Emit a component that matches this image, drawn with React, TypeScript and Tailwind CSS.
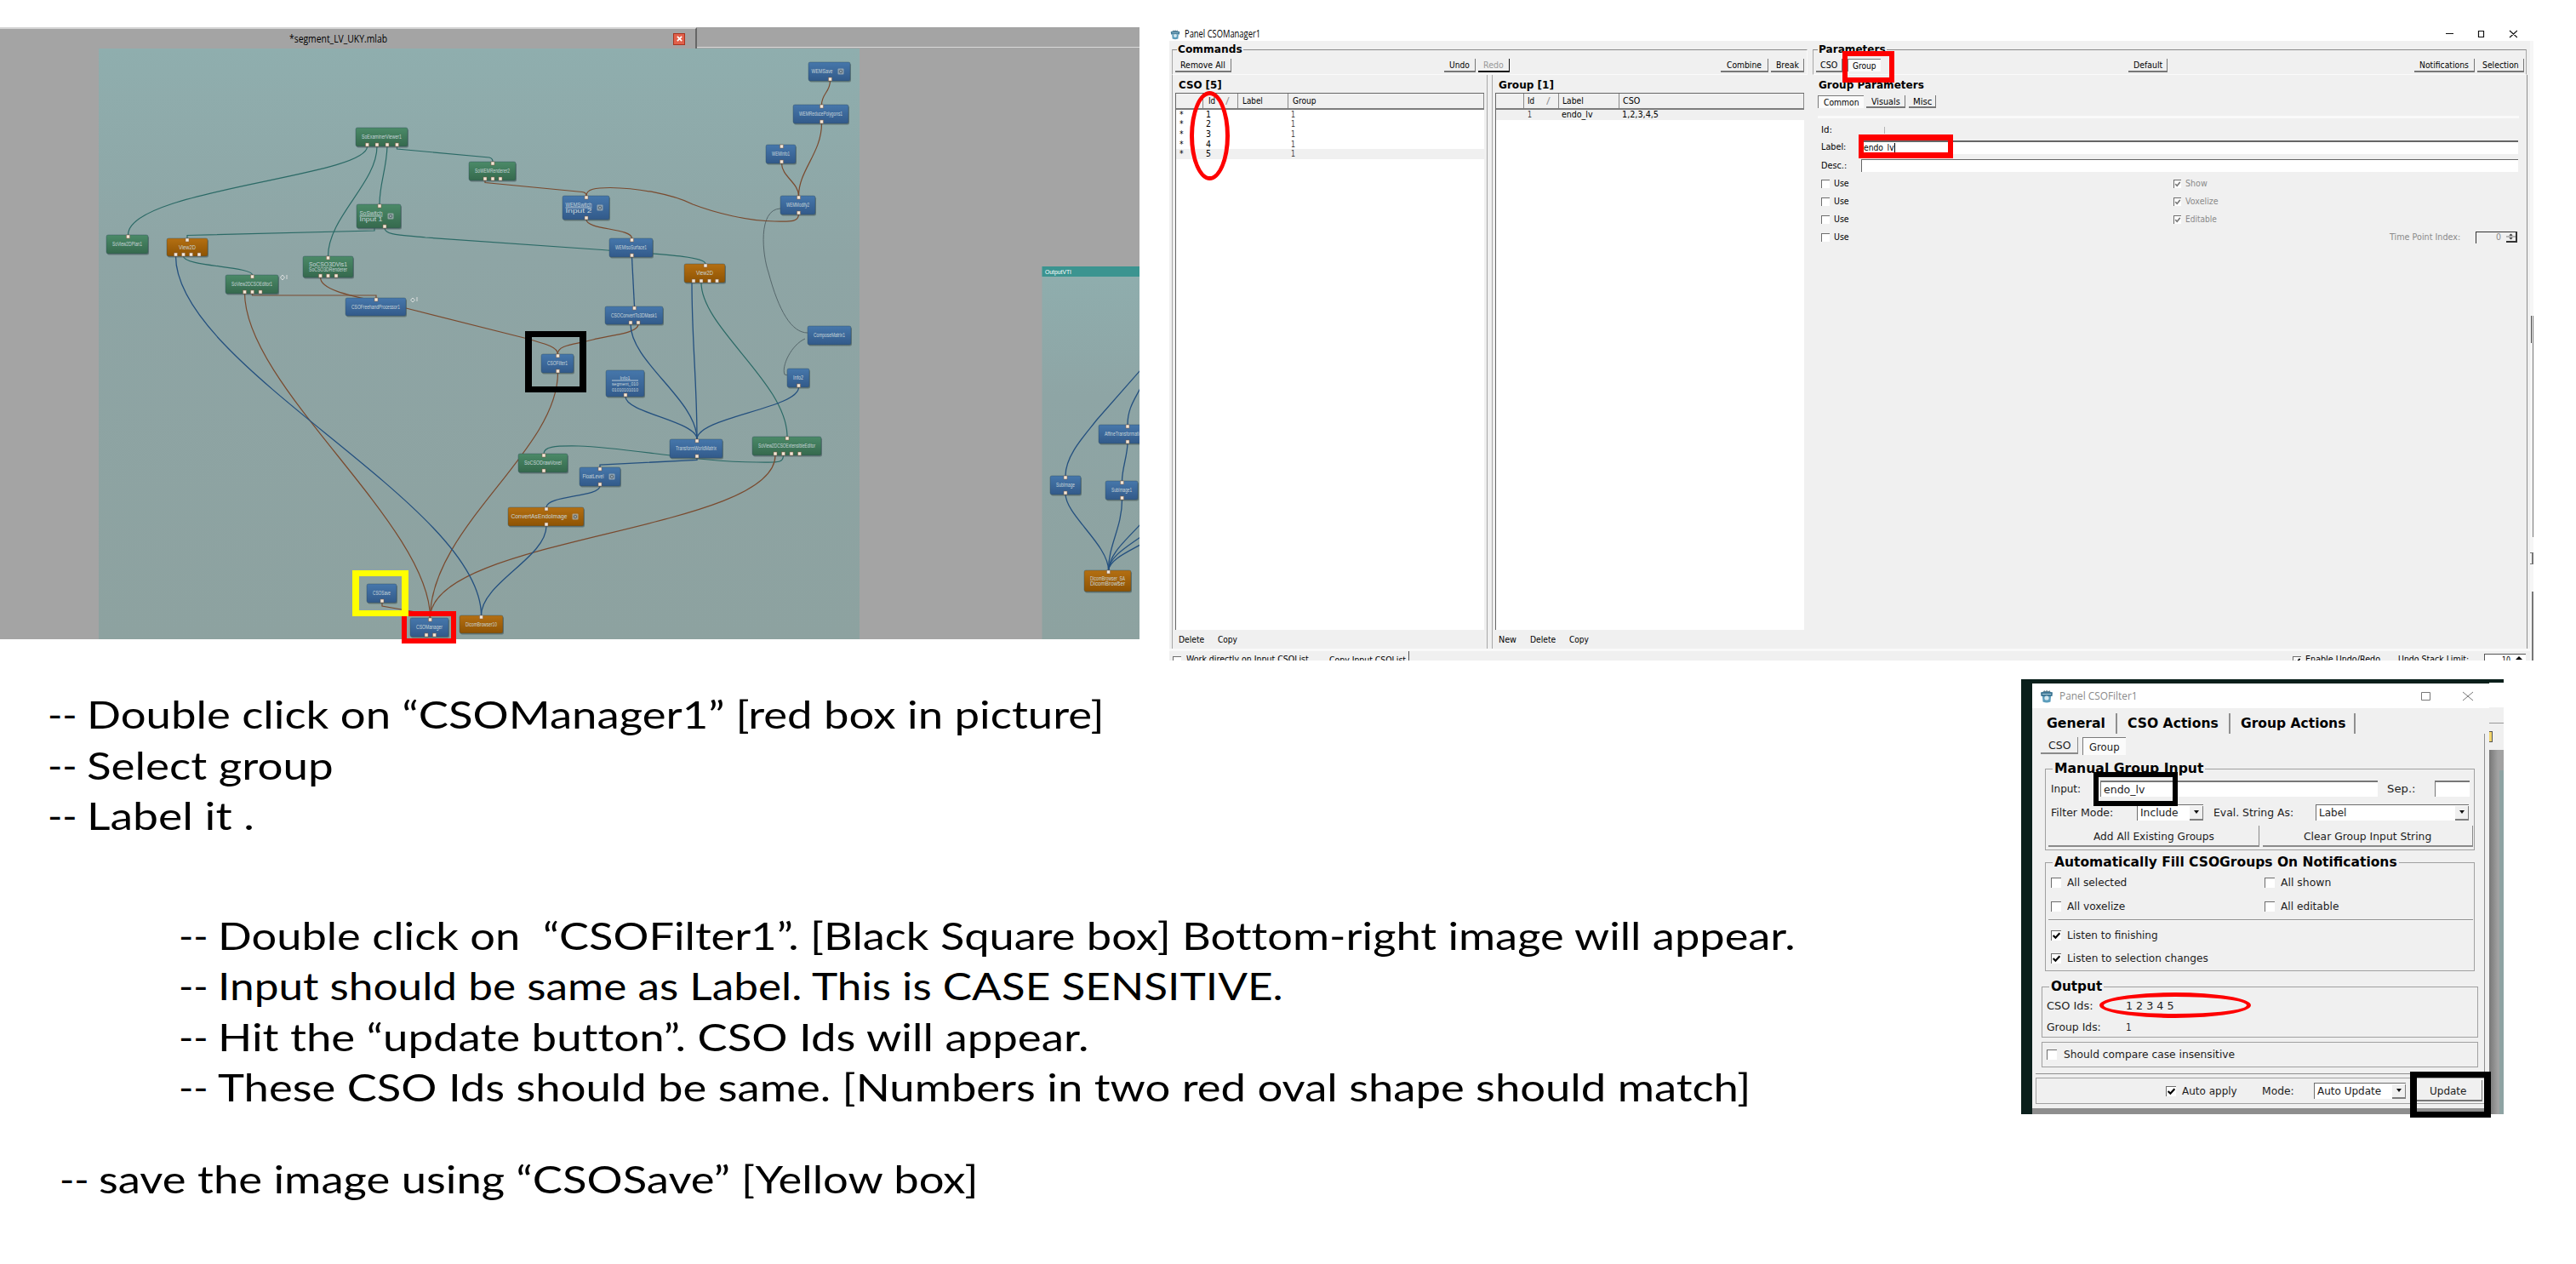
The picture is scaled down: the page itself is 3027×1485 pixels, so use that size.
import { useLayoutEffect, useRef, useState, type ReactNode } from "react";

/* Text stretched or squeezed horizontally to fill the width given by its class. */
function Fit({ c, children }: { c: string; children: ReactNode }) {
  const box = useRef<HTMLSpanElement>(null);
  const inner = useRef<HTMLSpanElement>(null);
  const [k, setK] = useState(1);
  useLayoutEffect(() => {
    if (box.current && inner.current) setK(box.current.clientWidth / inner.current.offsetWidth);
  }, []);
  return (
    <span ref={box} className={"block shrink-0 whitespace-pre " + c}>
      <span ref={inner} className="inline-block origin-left" style={{ transform: `scaleX(${k})` }}>
        {children}
      </span>
    </span>
  );
}

/* ---------- Node graph ---------- */

type Kind = "b" | "g" | "o";
type Node = {
  x: number; y: number; w: number; h: number; k: Kind;
  t: string[]; top?: number[]; bot?: number[]; icon?: number; rule?: boolean;
};

const nodes: Node[] = [
  { x: 418, y: 150, w: 61, h: 22, k: "g", t: ["SoExaminerViewer1"], bot: [431.5, 443, 455, 466.5] },
  { x: 551, y: 190, w: 55, h: 22, k: "g", t: ["SoWEMRenderer2"], top: [579], bot: [570, 579, 588] },
  { x: 419, y: 240, w: 52, h: 28, k: "g", t: ["SoSwitch", "Input 1"], top: [446], bot: [452], icon: 459, rule: true },
  { x: 125, y: 276, w: 49, h: 22, k: "g", t: ["SoView2DPlan1"], top: [150.5] },
  { x: 196, y: 280, w: 48, h: 21, k: "o", t: ["View2D"], top: [220], bot: [206.5, 215.5, 224.5, 234] },
  { x: 265, y: 323, w: 62, h: 22, k: "g", t: ["SoView2DCSOEditor1"], top: [296.5], bot: [287.5, 296.5, 306] },
  { x: 356, y: 301, w: 59, h: 25, k: "g", t: ["SoCSO3DVis1", "SoCSO3DRenderer"], top: [385.5], bot: [376.5, 385.5, 395] },
  { x: 406, y: 350, w: 71, h: 21, k: "b", t: ["CSOFreehandProcessor1"], top: [442] },
  { x: 950, y: 73, w: 49, h: 22, k: "b", t: ["WEMSave"], bot: [975.5], icon: 988 },
  { x: 932, y: 123, w: 65, h: 22, k: "b", t: ["WEMReducePolygons1"], top: [965.5], bot: [965.5] },
  { x: 900, y: 170, w: 35, h: 22, k: "b", t: ["WEMInfo1"], top: [918.5], bot: [918.5] },
  { x: 917, y: 230, w: 41, h: 22, k: "b", t: ["WEMModify2"], top: [938.5], bot: [938.5] },
  { x: 661, y: 230, w: 55, h: 28, k: "b", t: ["WEMSwitch", "Input 2"], top: [689], bot: [689], icon: 705, rule: true },
  { x: 716, y: 280, w: 51, h: 22, k: "b", t: ["WEMIsoSurface1"], top: [742.5], bot: [742.5] },
  { x: 804, y: 310, w: 48, h: 22, k: "o", t: ["View2D"], top: [829], bot: [815, 824, 833.5, 842.5] },
  { x: 711, y: 360, w: 68, h: 21, k: "b", t: ["CSOConvertTo3DMask1"], top: [745.5], bot: [741, 750] },
  { x: 949, y: 383, w: 51, h: 22, k: "b", t: ["ComposeMatrix1"] },
  { x: 636, y: 416, w: 38, h: 22, k: "b", t: ["CSOFilter1"], top: [655.5], bot: [655.5] },
  { x: 609, y: 533, w: 58, h: 22, k: "g", t: ["SoCSODrawVoxel"], top: [639], bot: [639] },
  { x: 597, y: 596, w: 89, h: 22, k: "o", t: ["ConvertAsEndoImage"], top: [642], bot: [642], icon: 676 },
  { x: 431, y: 686, w: 35, h: 22, k: "b", t: ["CSOSave"], bot: [449] },
  { x: 482, y: 726, w: 45, h: 22, k: "b", t: ["CSOManager"], top: [505.5], bot: [501, 510.5] },
  { x: 540, y: 723, w: 51, h: 21, k: "o", t: ["DicomBrowser10"], top: [565.5] },
  { x: 712, y: 435, w: 45, h: 31, k: "b", t: ["Info1", "segment_010", "01010101010"], bot: [735], rule: true },
  { x: 925, y: 433, w: 26, h: 22, k: "b", t: ["Info2"], bot: [938.5] },
  { x: 787, y: 516, w: 62, h: 22, k: "b", t: ["TransformWorldMatrix"], top: [819], bot: [819] },
  { x: 884, y: 513, w: 81, h: 22, k: "g", t: ["SoView2DCSOExtensibleEditor"], top: [925], bot: [911, 920.5, 930, 939.5] },
  { x: 681, y: 549, w: 48, h: 22, k: "b", t: ["FloatLevel"], top: [705], bot: [705], icon: 719 },
  { x: 1291, y: 499, w: 60, h: 22, k: "b", t: ["AffineTransformation"], top: [1325], bot: [1325] },
  { x: 1234, y: 559, w: 36, h: 22, k: "b", t: ["SubImage"], top: [1252], bot: [1252] },
  { x: 1299, y: 565, w: 38, h: 22, k: "b", t: ["SubImage1"], top: [1318.5], bot: [1318.5] },
  { x: 1274, y: 670, w: 55, h: 25, k: "o", t: ["DicomBrowser_SA", "DicomBrowser"], top: [1302.5] },
];

const green = [
  "M431.5 172C431.5 208 150.5 222 150.5 276",
  "M443 172C443 215 385.5 255 385.5 301",
  "M455 172C454 200 446 215 446 240",
  "M466.5 172V175L575 185Q579 186 579 190",
  "M440 268V271L220 276.500V280",
  "M452 268C452 276 470 276 500 279L700 293C760 298 829 300 829 310",
  "M215.500 301C215.500 313 296.500 313 296.500 323",
  "M824 332C824 385 925 450 925 513",
  "M920.500 535C920.500 545 912 543 889 543C820 543 740 526 680 524C650 523.500 639 525 639 533",
];
const brown = [
  "M975.500 95C975.500 108 965.500 110 965.500 123",
  "M965.500 145C965.500 180 938.500 200 938.500 230",
  "M918.500 192C918.500 207 938.500 215 938.500 230",
  "M938.500 252C938 262 925 260 910 260C880 260 840 250 814 240C790 228 750 221 717 220.500C700 220.500 689 222 689 230",
  "M570 212V214.500L684 225.500Q689 226 689 230",
  "M689 258C689 270 742.500 268 742.500 280",
  "M376.500 326C376.500 344 430 350 477 362L616 397C645 405 655 408 655.500 416",
  "M296.500 345V347H442V350",
  "M287.500 344C287.500 454 505.500 616 505.500 726",
  "M655.500 438C655.500 530 505.500 620 505.500 726",
  "M911 535C911 625 505.500 630 505.500 726",
  "M449 708V712L500 721Q505 722 505.500 726",
  "M750 381C750 392 715 394 697 399C675 405 655 405 655.500 416",
];
const blue = [
  "M742.500 302L745.500 360",
  "M741 381C741 425 819 470 819 516",
  "M813 332C813 400 819 450 819 516",
  "M735 466C735 485 819 495 819 516",
  "M938.500 455C938.500 480 819 490 819 516",
  "M206.500 301C206.500 431 565.500 593 565.500 723",
  "M819 538V540.500L705 546V549",
  "M705 571C705 584 642 582 642 596",
  "M642 618C642 655 565.500 685 565.500 723",
  "M1340 435L1289 493C1275 511 1252 535 1252 559",
  "M1340 456C1333 470 1325 480 1325 499",
  "M1325 520C1325 535 1318.500 550 1318.500 565",
  "M1252 580C1252 605 1302.500 640 1302.500 670",
  "M1318.500 587C1318.500 620 1302.500 640 1302.500 670",
  "M1340 616C1322 636 1304 650 1302.500 670",
  "M1340 631C1322 644 1304 654 1302.500 670",
  "M1340 640C1322 650 1304 658 1302.500 670",
];
const thin = [
  "M917 245C890 246 896 300 903 320C915 365 930 391 949 391",
  "M946 398C930 405 918 430 922 440L926 441",
];

function GraphNode({ n }: { n: Node }) {
  const fill = n.k === "b" ? "url(#nb)" : n.k === "g" ? "url(#ng)" : "url(#no)";
  const room = n.icon ? n.icon - 6 - n.x : n.w;
  const cx = n.x + room / 2;
  const len = room - (n.icon ? 7 : 14);
  const cy = n.y + n.h / 2;
  const step = n.rule ? 7 : 5.5;
  return (
    <g>
      <rect x={n.x + 1} y={n.y + 1.5} width={n.w} height={n.h} rx="2" fill="#4a5c5c" opacity="0.6" />
      <rect x={n.x} y={n.y} width={n.w} height={n.h} rx="2" fill={fill} stroke="#2f4a5a" strokeOpacity="0.5" strokeWidth="0.8" />
      {n.t.map((s, i) => (
        <text
          key={i}
          x={cx}
          y={cy + 2.3 + (i - (n.t.length - 1) / 2) * step}
          textAnchor="middle"
          textLength={n.t.length > 1 && i === 0 && n.t.length === 3 ? 12 : s === "View2D" ? 20 : len}
          lengthAdjust="spacingAndGlyphs"
          fontSize={n.t.length === 3 ? 5.5 : 6.5}
          fill="#c9d6da"
        >
          {s}
        </text>
      ))}
      {n.rule && <path d={`M${cx - len / 2} ${n.t.length === 3 ? n.y + 12 : cy}h${len}`} stroke="#dbe4e6" strokeWidth="0.8" />}
      {n.icon && (
        <g>
          <rect x={n.icon - 3.5} y={cy - 3.5} width="7" height="7" rx="1" fill="#a9b4b8" opacity="0.75" />
          <circle cx={n.icon} cy={cy} r="1.8" fill="none" stroke="#50606a" strokeWidth="0.9" />
        </g>
      )}
      {n.top?.map((p) => <rect key={p} x={p - 2} y={n.y} width="4" height="4" fill="#f1e6d8" stroke="#7d5a40" strokeWidth="0.5" />)}
      {n.bot?.map((p) => <rect key={p} x={p - 2} y={n.y + n.h - 4} width="4" height="4" fill="#f1e6d8" stroke="#7d5a40" strokeWidth="0.5" />)}
    </g>
  );
}

function Wires({ list, color, w }: { list: string[]; color: string; w: number }) {
  return (
    <g fill="none" stroke={color} strokeWidth={w}>
      {list.map((d) => <path key={d} d={d} />)}
    </g>
  );
}

function Graph() {
  return (
    <div className="flex h-[719px] w-[1339px] shrink-0 flex-col bg-[#a4a4a4]">
      <div className="flex h-[25px]">
        <div className="flex h-full w-[819px] items-center border-t-2 border-r-2 border-t-[#d4d4d4] border-r-[#666] pl-[340px]">
          <Fit c="w-[115px] font-[Open_Sans,sans-serif] text-[12px] leading-[18px] text-black">*segment_LV_UKY.mlab</Fit>
          <div className="ml-[336px] flex h-[14px] w-[14px] items-center justify-center border border-[#a8331f] bg-[#e2604a]">
            <svg viewBox="0 0 8 8" className="h-[7px] w-[7px]"><path d="M1 1L7 7M7 1L1 7" stroke="#fff" strokeWidth="2" /></svg>
          </div>
        </div>
        <div className="h-[24px] flex-1 border-b border-[#d8d8d8]" />
      </div>
      <svg viewBox="0 57 1339 694" className="h-[694px] w-[1339px] font-[Liberation_Sans,sans-serif]">
        <defs>
          <linearGradient id="bg" x1="0" y1="0" x2="0" y2="1">
            <stop offset="0" stopColor="#8faeae" /><stop offset="0.35" stopColor="#8ea5a5" /><stop offset="1" stopColor="#8da2a0" />
          </linearGradient>
          <linearGradient id="nb" x1="0" y1="0" x2="0" y2="1"><stop offset="0" stopColor="#4677ab" /><stop offset="1" stopColor="#325a8a" /></linearGradient>
          <linearGradient id="ng" x1="0" y1="0" x2="0" y2="1"><stop offset="0" stopColor="#4b8a68" /><stop offset="1" stopColor="#35694d" /></linearGradient>
          <linearGradient id="no" x1="0" y1="0" x2="0" y2="1"><stop offset="0" stopColor="#b46f12" /><stop offset="1" stopColor="#8e5303" /></linearGradient>
        </defs>
        <rect x="116" y="57" width="894" height="694" fill="url(#bg)" />
        <rect x="1224.500" y="313" width="115" height="438" fill="url(#bg)" />
        <rect x="1224.500" y="313" width="115" height="12" fill="#3b9490" />
        <text x="1228" y="321.500" fontSize="7.500" fill="#fff" textLength="31" lengthAdjust="spacingAndGlyphs">OutputVTI</text>
        <Wires list={thin} color="#4f6064" w={0.9} />
        <Wires list={green} color="#2b6a66" w={1.2} />
        <Wires list={brown} color="#7a4a2e" w={1.2} />
        <Wires list={blue} color="#24507f" w={1.3} />
        {nodes.map((n) => <GraphNode key={`${n.x}-${n.y}`} n={n} />)}
        <g fill="none" stroke="#e3e3e3" strokeWidth="0.9">
          <path d="M332 323l2.500 3l-2.500 3l-2.500-3zM337 328v-5M485 350l2.500 2.500l-2.500 2.500l-2.500-2.500zM490 354v-5" />
        </g>
      </svg>
    </div>
  );
}

/* ---------- Classic dialog widgets ---------- */

function Btn({ c, t, children }: { c: string; t: string; children: string }) {
  return (
    <div className={"flex shrink-0 items-center justify-center border-r-[1.5px] border-b-2 bg-[#f0f0f0] pt-[2px] " + c}>
      <Fit c={t}>{children}</Fit>
    </div>
  );
}

function Pressed({ c, t, children }: { c: string; t: string; children: string }) {
  return (
    <div className={"flex shrink-0 items-center justify-center border-t-[1.5px] border-l-[1.5px] border-[#7a7a7a] bg-[#fbfbfb] pt-px " + c}>
      <Fit c={t}>{children}</Fit>
    </div>
  );
}

function Check({ c, on }: { c: string; on?: boolean }) {
  return (
    <div className={"shrink-0 border-t-[1.5px] border-l-[1.5px] border-[#6d6d6d] bg-white " + c}>
      {on && (
        <svg viewBox="0 0 10 10" preserveAspectRatio="none" className="h-full w-full">
          <path d="M1.500 4.500L4 7L8.500 2" fill="none" stroke="currentColor" strokeWidth="2" />
        </svg>
      )}
    </div>
  );
}

function Logo({ c }: { c: string }) {
  return (
    <svg viewBox="0 0 16 16" className={"shrink-0 " + c}>
      <path d="M1 3.500Q8 1 15 3.500L14.500 8H1.500Z" fill="#3f7896" />
      <path d="M3 8H13L12.500 14.500Q8 16.500 3.500 14.500Z" fill="#5b9dbc" />
      <path d="M4 3L5 1L7 2.500L8 0.500L9.500 2.500L11.500 1L12 3Z" fill="#5c7f8e" />
      <circle cx="8" cy="10" r="2.600" fill="#d5e8ef" />
      <path d="M3 5.500H13" stroke="#a8cbd9" strokeWidth="1" />
    </svg>
  );
}

function Select({ c, t, children }: { c: string; t: string; children: string }) {
  return (
    <div className={"flex h-[19px] shrink-0 items-center border-t-[1.5px] border-l-[1.5px] border-[#6d6d6d] bg-white pl-[3px] " + c}>
      <Fit c={t}>{children}</Fit>
      <div className="ml-auto flex h-[17px] w-[16px] items-center justify-center border-r-[1.500px] border-b-2 border-[#7d7d7d] bg-[#f0f0f0]">
        <svg viewBox="0 0 6 4" className="h-[4px] w-[6px]"><path d="M0 0H6L3 4Z" fill="#111" /></svg>
      </div>
    </div>
  );
}

/* ---------- CSOManager window ---------- */

function HeadCell({ c, children }: { c: string; children?: ReactNode }) {
  return <div className={"flex h-full shrink-0 items-center border-r border-[#8a8a8a] pt-px " + c}>{children}</div>;
}

function CsoTable() {
  return (
    <div className="flex h-[674px] w-[371px] flex-col border-x border-[#a8a8a8] pl-[3px]">
      <Fit c="ml-[4px] mt-[3px] h-[18px] w-[51px] text-[13px] leading-[18px] font-bold">CSO [5]</Fit>
      <div className="h-[631px] w-[363px] border-t border-l-[1.500px] border-[#666] bg-white">
        <div className="flex h-[19px] border-b-2 border-[#7d7d7d] bg-[#f0f0f0]">
          <HeadCell c="w-[32px]" />
          <HeadCell c="w-[41px] pl-[6px]">
            <Fit c="w-[8px]">Id</Fit>
            <Fit c="ml-[12px] w-[5px] text-[#999]">/</Fit>
          </HeadCell>
          <HeadCell c="w-[59px] pl-[5px]"><Fit c="w-[24px]">Label</Fit></HeadCell>
          <HeadCell c="flex-1 pl-[5px]"><Fit c="w-[28px]">Group</Fit></HeadCell>
        </div>
        {["1", "2", "3", "4", "5"].map((id) => (
          <div key={id} className={"flex h-[11.600px] items-center pl-[4px] leading-[12px] " + (id === "5" ? "bg-[#f0f0f0]" : "")}>
            <Fit c="w-[5px]">*</Fit>
            <Fit c="ml-[26px] w-[6px]">{id}</Fit>
            <Fit c="ml-[94px] w-[5px] text-[#444]">1</Fit>
          </div>
        ))}
      </div>
      <div className="flex h-[21px] items-center pt-[3px] pl-[4px]">
        <Fit c="w-[30px]">Delete</Fit>
        <Fit c="ml-[16px] w-[23px]">Copy</Fit>
      </div>
    </div>
  );
}

function GroupTable() {
  return (
    <div className="ml-[5px] flex h-[674px] w-[371px] flex-col border-l border-[#a8a8a8] pl-[3px]">
      <Fit c="ml-[4px] mt-[3px] h-[18px] w-[65px] text-[13px] leading-[18px] font-bold">Group [1]</Fit>
      <div className="h-[631px] w-[363px] border-t border-l-[1.500px] border-[#666] bg-white">
        <div className="flex h-[19px] border-b-2 border-[#7d7d7d] bg-[#f0f0f0]">
          <HeadCell c="w-[33px]" />
          <HeadCell c="w-[41px] pl-[4px]">
            <Fit c="w-[8px]">Id</Fit>
            <Fit c="ml-[14px] w-[5px] text-[#999]">/</Fit>
          </HeadCell>
          <HeadCell c="w-[71px] pl-[4px]"><Fit c="w-[25px]">Label</Fit></HeadCell>
          <HeadCell c="flex-1 pl-[4px]"><Fit c="w-[20px]">CSO</Fit></HeadCell>
        </div>
        <div className="flex h-[11.600px] items-center bg-[#f0f0f0] pl-[37px] leading-[12px]">
          <Fit c="w-[5px] text-[#444]">1</Fit>
          <Fit c="ml-[35px] w-[37px]">endo_lv</Fit>
          <Fit c="ml-[34px] w-[43px]">1,2,3,4,5</Fit>
        </div>
      </div>
      <div className="flex h-[21px] items-center pt-[3px] pl-[4px]">
        <Fit c="w-[21px]">New</Fit>
        <Fit c="ml-[16px] w-[30px]">Delete</Fit>
        <Fit c="ml-[16px] w-[23px]">Copy</Fit>
      </div>
    </div>
  );
}

function UseRow({ children }: { children?: ReactNode }) {
  return (
    <div className="flex h-[21px] items-center pl-[10px]">
      <Check c="h-[10px] w-[10px]" />
      <Fit c="ml-[5px] w-[18px]">Use</Fit>
      {children}
    </div>
  );
}

function GrayOption({ t, children }: { t: string; children: string }) {
  return (
    <div className="ml-[381px] flex items-center text-[#8a8a8a]">
      <Check c="h-[10px] w-[9px] text-[#777]" on />
      <Fit c={"ml-[5px] " + t}>{children}</Fit>
    </div>
  );
}

function ManagerWindow() {
  return (
    <div className="flex h-[744px] w-[1603px] shrink-0 flex-col overflow-hidden font-[DejaVu_Sans,sans-serif] text-[11px] leading-[14px] text-black">
      <div className="flex h-[16px] items-center bg-white">
        <Logo c="ml-px h-[13px] w-[12px]" />
        <Fit c="ml-[5px] w-[89px] font-[Open_Sans,sans-serif] text-[12px]">Panel CSOManager1</Fit>
        <svg viewBox="0 0 84 12" className="ml-[1393px] h-[12px] w-[84px]">
          <path d="M0 5.500H9M38.500 2.500H44.500V9.500H38.500ZM75 2L84 10M84 2L75 10" fill="none" stroke="#111" strokeWidth="1.200" />
        </svg>
      </div>
      <div className="flex h-[728px]">
        <div className="flex w-[1599px] flex-col bg-[#f0f0f0]">
          <div className="flex h-[714px]">
            <div className="w-[753px] pl-[3px]">
              <fieldset className="mt-[2px] h-[38px] w-[747px] border border-t-[#8a8a8a] border-r-[#fafafa] border-b-[#fafafa] border-l-[#a8a8a8]">
                <legend className="ml-[5px] h-[16px] px-px">
                  <Fit c="h-[16px] w-[76px] text-[13px] leading-[16px] font-bold">Commands</Fit>
                </legend>
                <div className="flex pt-[3px] pl-[3px]">
                  <Btn c="h-[16px] w-[66px] border-[#777]" t="w-[53px]">Remove All</Btn>
                  <Btn c="ml-[250px] h-[16px] w-[37px] border-[#777]" t="w-[24px]">Undo</Btn>
                  <Btn c="ml-[3px] h-[16px] w-[37px] border-[#111] text-[#999]" t="w-[24px]">Redo</Btn>
                  <Btn c="ml-[248px] h-[16px] w-[56px] border-[#777]" t="w-[41px]">Combine</Btn>
                  <Btn c="ml-[3px] h-[16px] w-[39px] border-[#777]" t="w-[27px]">Break</Btn>
                </div>
              </fieldset>
              <div className="flex">
                <CsoTable />
                <GroupTable />
              </div>
            </div>
            <div className="w-[846px] pl-[3px]">
              <fieldset className="mt-[2px] h-[38px] w-[839px] border border-t-[#8a8a8a] border-r-[#a8a8a8] border-b-[#fafafa] border-l-[#a8a8a8]">
                <legend className="ml-[5px] h-[16px] px-px">
                  <Fit c="h-[16px] w-[79px] text-[13px] leading-[16px] font-bold">Parameters</Fit>
                </legend>
                <div className="flex pt-[3px] pl-[3px]">
                  <Btn c="h-[16px] w-[31px] border-[#777]" t="w-[20px]">CSO</Btn>
                  <Pressed c="ml-[6px] h-[15px] w-[39px]" t="w-[28px]">Group</Pressed>
                  <Btn c="ml-[291px] h-[16px] w-[46px] border-[#777]" t="w-[34px]">Default</Btn>
                  <Btn c="ml-[290px] h-[16px] w-[71px] border-[#777]" t="w-[58px]">Notifications</Btn>
                  <Btn c="ml-[3px] h-[16px] w-[55px] border-[#777]" t="w-[43px]">Selection</Btn>
                </div>
              </fieldset>
              <div className="h-[674px] w-[840px] border-r border-[#8f8f8f]">
                <Fit c="ml-[7px] pt-[3px] h-[21px] w-[124px] text-[13px] leading-[18px] font-bold">Group Parameters</Fit>
                <div className="mt-[3px] flex h-[15px] pl-[6px]">
                  <Pressed c="h-[15px] w-[54px]" t="w-[42px]">Common</Pressed>
                  <Btn c="ml-[3px] h-[15px] w-[46px] border-[#777]" t="w-[34px]">Visuals</Btn>
                  <Btn c="ml-[4px] h-[15px] w-[32px] border-[#777]" t="w-[22px]">Misc</Btn>
                </div>
                <div className="mt-[9px] ml-[6px] h-[3px] w-[824px] bg-[#fafafa]" />
                <div className="mt-[7px] flex h-[14px] items-center pl-[10px]">
                  <Fit c="w-[13px]">Id:</Fit>
                  <span className="ml-[61px] h-[8px] w-px bg-[#b5b5b5]" />
                </div>
                <div className="mt-[5px] flex h-[16px] items-center pl-[10px]">
                  <Fit c="w-[29px]">Label:</Fit>
                  <div className="ml-[18px] flex h-[16px] w-[772px] items-center border-t-2 border-l-[1.500px] border-[#666] bg-white pl-[2px]">
                    <Fit c="w-[36px]">endo_lv</Fit>
                    <span className="h-[12px] w-px bg-black" />
                  </div>
                </div>
                <div className="mt-[6px] flex h-[15px] items-center pl-[10px]">
                  <Fit c="w-[30px]">Desc.:</Fit>
                  <div className="ml-[17px] h-[15px] w-[772px] border-t-[1.500px] border-l-[1.500px] border-[#666] bg-white" />
                </div>
                <div className="mt-[3px]">
                  <UseRow><GrayOption t="w-[26px]">Show</GrayOption></UseRow>
                  <UseRow><GrayOption t="w-[39px]">Voxelize</GrayOption></UseRow>
                  <UseRow><GrayOption t="w-[37px]">Editable</GrayOption></UseRow>
                  <UseRow>
                    <Fit c="ml-[635px] w-[83px] text-[#8a8a8a]">Time Point Index:</Fit>
                    <div className="ml-[18px] flex h-[14px] w-[49px] items-center border-t-[1.500px] border-l-[1.500px] border-[#333] pl-[23px] text-[#8a8a8a]">
                      <Fit c="w-[6px]">0</Fit>
                      <div className="ml-auto flex h-[12px] w-[13px] flex-col items-center justify-around border-r-2 border-b-2 border-[#333]">
                        <svg viewBox="0 0 14 12" className="h-[10px] w-[11px]"><path d="M5 4H9L7 2ZM5 8H9L7 10ZM0 6H14" fill="#333" stroke="#333" strokeWidth="0.800" /></svg>
                      </div>
                    </div>
                  </UseRow>
                </div>
              </div>
            </div>
          </div>
          <div className="flex h-[14px] border-t-[3px] border-[#f9f9f9] pl-[4px]">
            <Check c="mt-[6px] h-[10px] w-[10px]" />
            <Fit c="mt-[3px] ml-[6px] w-[144px]">Work directly on Input CSOList</Fit>
            <div className="ml-[21px] h-[20px] w-[97px] border-r border-[#555] pt-[4px] pl-[3px]"><Fit c="w-[90px]">Copy Input CSOList</Fit></div>
            <Check c="mt-[6px] ml-[1038px] h-[10px] w-[10px]" on />
            <Fit c="mt-[3px] ml-[5px] w-[88px]">Enable Undo/Redo</Fit>
            <Fit c="mt-[3px] ml-[21px] w-[83px]">Undo Stack Limit:</Fit>
            <div className="mt-[3px] ml-[18px] flex h-[16px] w-[49px] border-t-[1.500px] border-l-[1.500px] border-[#555] bg-white pl-[20px]">
              <Fit c="w-[10px]">10</Fit>
              <svg viewBox="0 0 8 4" className="mt-[2px] ml-[6px] h-[4px] w-[8px]"><path d="M4 0L8 4H0Z" /></svg>
            </div>
          </div>
        </div>
        <div className="flex w-[4px] flex-col bg-[#f6f6f6]">
          <div className="mt-[323px] h-[260px] border-r border-[#777]">
            <div className="h-[32px] w-[2px] border-r border-[#444]" />
          </div>
          <div className="mt-[18px] h-[14px] border-y border-r-2 border-[#777]" />
          <div className="mt-[32px] h-[81px] border-r-2 border-[#777]" />
        </div>
      </div>
    </div>
  );
}

/* ---------- CSOFilter window ---------- */

function FilterWindow() {
  return (
    <div className="flex h-[511px] w-[567px] bg-[#0a1f1b] font-[DejaVu_Sans,sans-serif] text-[12px] leading-[16px] text-[#1c1c1c]">
      <div className="ml-[13px] flex h-[511px] w-[537px] flex-col pt-[5px]">
        <div className="flex h-[29px] shrink-0 items-center bg-white pl-[9px]">
          <Logo c="h-[16px] w-[16px]" />
          <Fit c="ml-[7px] w-[92px] font-[Open_Sans,sans-serif] text-[12px] text-[#8a8a8a]">Panel CSOFilter1</Fit>
          <svg viewBox="0 0 62 12" className="ml-[333px] h-[12px] w-[62px]">
            <path d="M0.500 1.500H10.500V10.500H0.500ZM49 1L61 11M61 1L49 11" fill="none" stroke="#777" strokeWidth="1" />
          </svg>
        </div>
        <div className="h-[470px] shrink-0 bg-[#f0f0f0]">
          <div className="flex h-[30px] items-center pt-[6px] text-[15px] leading-[20px] font-bold text-black">
            <Fit c="ml-[17px] w-[69px]">General</Fit>
            <span className="ml-[12px] h-[24px] w-[2px] bg-[#8f8f8f]" />
            <Fit c="ml-[12px] w-[107px]">CSO Actions</Fit>
            <span className="ml-[12px] h-[24px] w-[2px] bg-[#8f8f8f]" />
            <Fit c="ml-[12px] w-[123px]">Group Actions</Fit>
            <span className="ml-[10px] h-[24px] w-[2px] bg-[#8f8f8f]" />
          </div>
          <div className="ml-[4px] h-[400px] w-[528px] border-r-[1.500px] border-b border-[#8f8f8f]">
            <div className="flex h-[24px] pt-[4px] pl-[6px]">
              <Btn c="h-[20px] w-[44px] border-[#8a8a8a]" t="w-[26px]">CSO</Btn>
              <Pressed c="ml-[5px] h-[21px] w-[51px]" t="w-[36px]">Group</Pressed>
            </div>
            <fieldset className="mt-[8px] ml-[11px] h-[105px] w-[505px] border border-[#a0a0a0]">
              <legend className="ml-[8px] h-[18px] px-[2px]">
                <Fit c="h-[18px] w-[175px] text-[15px] leading-[18px] font-bold text-black">Manual Group Input</Fit>
              </legend>
              <div className="mt-[5px] flex h-[19px] items-center pl-[6px]">
                <Fit c="w-[35px]">Input:</Fit>
                <div className="ml-[23px] flex h-[19px] w-[326px] items-center border-t-2 border-l-[1.500px] border-[#777] bg-white pl-[3px]"><Fit c="w-[48px]">endo_lv</Fit></div>
                <Fit c="ml-[11px] w-[33px]">Sep.:</Fit>
                <div className="ml-[23px] h-[19px] w-[41px] border-t-2 border-l-[1.500px] border-[#777] bg-white" />
              </div>
              <div className="mt-[9px] flex h-[19px] items-center pl-[6px]">
                <Fit c="w-[73px]">Filter Mode:</Fit>
                <Select c="ml-[28px] w-[78px]" t="w-[45px]">Include</Select>
                <Fit c="ml-[12px] w-[94px]">Eval. String As:</Fit>
                <Select c="ml-[26px] w-[180px]" t="w-[32px]">Label</Select>
              </div>
              <div className="mt-[6px] flex pl-[3px]">
                <Btn c="h-[25px] w-[248px] border-[#8a8a8a]" t="w-[142px]">Add All Existing Groups</Btn>
                <Btn c="ml-[4px] h-[25px] w-[247px] border-[#8a8a8a]" t="w-[150px]">Clear Group Input String</Btn>
              </div>
            </fieldset>
            <fieldset className="mt-[4px] ml-[11px] h-[138px] w-[505px] border border-[#a0a0a0]">
              <legend className="ml-[8px] h-[20px] px-[2px]">
                <Fit c="h-[20px] w-[403px] text-[15px] leading-[20px] font-bold text-black">Automatically Fill CSOGroups On Notifications</Fit>
              </legend>
              <div className="mt-[4px] flex h-[20px] items-center pl-[6px]">
                <Check c="h-[12px] w-[12px]" />
                <Fit c="ml-[7px] w-[70px]">All selected</Fit>
                <Check c="ml-[162px] h-[12px] w-[12px]" />
                <Fit c="ml-[7px] w-[59px]">All shown</Fit>
              </div>
              <div className="mt-[8px] flex h-[20px] items-center pl-[6px]">
                <Check c="h-[12px] w-[12px]" />
                <Fit c="ml-[7px] w-[68px]">All voxelize</Fit>
                <Check c="ml-[164px] h-[12px] w-[12px]" />
                <Fit c="ml-[7px] w-[68px]">All editable</Fit>
              </div>
              <div className="mt-[5px] ml-[3px] h-[2px] w-[499px] border-t border-b border-t-[#909090] border-b-[#fafafa]" />
              <div className="mt-[7px] flex h-[20px] items-center pl-[6px]">
                <Check c="h-[12px] w-[12px] text-black" on />
                <Fit c="ml-[7px] w-[107px]">Listen to finishing</Fit>
              </div>
              <div className="mt-[7px] flex h-[20px] items-center pl-[6px]">
                <Check c="h-[12px] w-[12px] text-black" on />
                <Fit c="ml-[7px] w-[166px]">Listen to selection changes</Fit>
              </div>
            </fieldset>
            <fieldset className="mt-[9px] ml-[7px] h-[69px] w-[513px] border border-[#a0a0a0]">
              <legend className="ml-[8px] h-[18px] px-[2px]">
                <Fit c="h-[18px] w-[60px] text-[15px] leading-[18px] font-bold text-black">Output</Fit>
              </legend>
              <div className="mt-[4px] flex h-[20px] items-center pl-[5px]">
                <Fit c="w-[55px]">CSO Ids:</Fit>
                <Fit c="ml-[38px] w-[56px]">1 2 3 4 5</Fit>
              </div>
              <div className="mt-[5px] flex h-[20px] items-center pl-[5px]">
                <Fit c="w-[64px]">Group Ids:</Fit>
                <Fit c="ml-[29px] w-[7px]">1</Fit>
              </div>
            </fieldset>
            <div className="mt-[5px] ml-[7px] flex h-[30px] w-[513px] items-center border border-[#a0a0a0] pl-[5px]">
              <Check c="h-[12px] w-[12px]" />
              <Fit c="ml-[8px] w-[201px]">Should compare case insensitive</Fit>
            </div>
          </div>
          <div className="mt-[4px] ml-[4px] flex h-[31px] w-[528px] items-center border border-[#a0a0a0] pl-[152px]">
            <Check c="h-[12px] w-[12px] text-black" on />
            <Fit c="ml-[7px] w-[65px]">Auto apply</Fit>
            <Fit c="ml-[29px] w-[38px]">Mode:</Fit>
            <Select c="ml-[23px] w-[108px]" t="w-[75px]">Auto Update</Select>
            <Btn c="ml-[10px] h-[25px] w-[80px] border-[#777]" t="w-[43px]">Update</Btn>
          </div>
        </div>
        <div className="h-[7px] shrink-0 bg-[#8e8e8e]" />
      </div>
      <div className="mt-[4px] flex w-[17px] flex-col">
        <div className="h-[29px] bg-white" />
        <div className="h-[19px] border-b border-[#999] bg-[#f0f0f0]" />
        <div className="flex h-[31px] items-center bg-[#f0f0f0]"><span className="h-[13px] w-[4px] border border-l-0 border-[#555] bg-[#f3d56b]" /></div>
        <div className="flex flex-1 bg-linear-to-r from-[#777] to-[#a2a2a2] to-60%">
          <span className="mt-[24px] ml-auto w-[5px] bg-[#8ea3a3]" />
        </div>
      </div>
    </div>
  );
}

/* ---------- Instructions ---------- */

function Step({ c, children }: { c: string; children: string }) {
  return (
    <div className="flex h-[59.500px] leading-[60px] [font-variant-ligatures:none]">
      <Fit c="w-[35px]">--</Fit>
      <Fit c={"ml-[11px] " + c}>{children}</Fit>
    </div>
  );
}

export default function App() {
  return (
    <div className="relative flex h-[1485px] w-[3027px] flex-col overflow-hidden bg-white">
      <div className="flex h-[766px] shrink-0 items-start pt-[32px]">
        <Graph />
        <div className="ml-[35px]"><ManagerWindow /></div>
      </div>
      <div className="flex shrink-0 items-start">
        <div className="w-[2375px] pt-[43px] font-[Lato,sans-serif] text-[44px] text-black">
          <div className="pl-[56px]">
            <Step c="w-[1195px]">Double click on “CSOManager1” [red box in picture]</Step>
            <Step c="w-[290px]">Select group</Step>
            <Step c="w-[197px]">Label it .</Step>
          </div>
          <div className="pt-[81px] pl-[210px]">
            <Step c="w-[1854px]">Double click on  “CSOFilter1”. [Black Square box] Bottom-right image will appear.</Step>
            <Step c="w-[1252px]">Input should be same as Label. This is CASE SENSITIVE.</Step>
            <Step c="w-[1023px]">Hit the “update button”. CSO Ids will appear.</Step>
            <Step c="w-[1801px]">These CSO Ids should be same. [Numbers in two red oval shape should match]</Step>
          </div>
          <div className="pt-[48px] pl-[70px]">
            <Step c="w-[1033px]">save the image using “CSOSave” [Yellow box]</Step>
          </div>
        </div>
        <div className="mt-[32px]"><FilterWindow /></div>
      </div>

      {/* Highlight frames drawn over the windows */}
      <div className="absolute top-[389px] left-[617px] h-[72px] w-[72px] border-x-8 border-y-[7px] border-black" />
      <div className="absolute top-[718px] left-[472px] h-[38px] w-[64px] border-x-[6px] border-y-[6px] border-[#fe0000]" />
      <div className="absolute top-[670px] left-[414px] h-[54px] w-[66px] border-x-8 border-y-[7px] border-[#ffff00]" />
      <div className="absolute top-[107px] left-[1398px] h-[105px] w-[47px] rounded-[50%] border-[5px] border-[#fe0000]" />
      <div className="absolute top-[60px] left-[2165px] h-[37px] w-[61px] border-[6px] border-[#fe0000]" />
      <div className="absolute top-[158px] left-[2184px] h-[28px] w-[111px] border-x-[6px] border-y-[7px] border-[#fe0000]" />
      <div className="absolute top-[907px] left-[2460px] h-[40px] w-[99px] border-[6px] border-black" />
      <div className="absolute top-[1166px] left-[2467px] h-[30px] w-[178px] rounded-[50%] border-[5px] border-[#fe0000]" />
      <div className="absolute top-[1259px] left-[2832px] h-[54px] w-[95px] border-x-8 border-y-[7px] border-black" />
    </div>
  );
}
